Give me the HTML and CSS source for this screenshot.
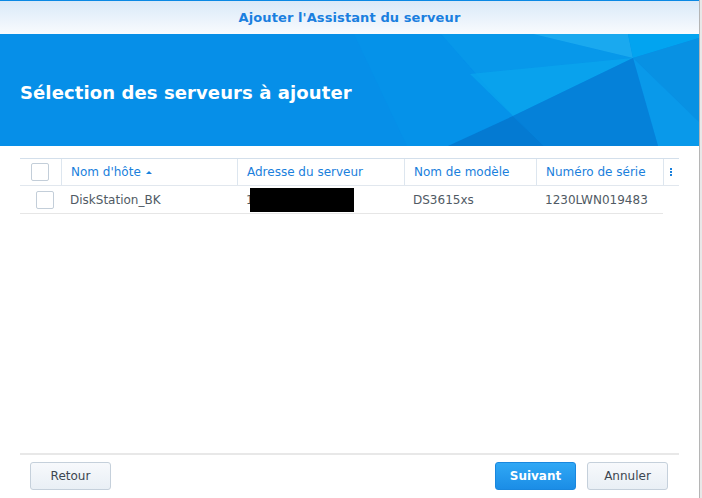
FILE: index.html
```html
<!DOCTYPE html>
<html lang="fr">
  <head>
    <meta charset="UTF-8" />
    <title>Ajouter l'Assistant du serveur</title>
    <link rel="stylesheet" href="styles.css">
  </head>
  <body>
    <div class="window">
      <!-- Title bar -->
      <div class="titlebar">Ajouter l'Assistant du serveur</div>

      <!-- Banner with polygon background -->
      <div class="banner">
        <svg class="banner-bg" viewBox="0 0 699 112" preserveAspectRatio="none">
          <polygon points="354,0 441,0 513,82 448,112 407,112" fill="#0592e9" />
          <polygon points="441,0 533,0 633,24 513,82" fill="#0798ea" />
          <polygon points="470,40 633,24 513,82" fill="#0aa6ee" opacity="0.7" />
          <polygon points="533,0 628,0 633,24" fill="#1aa9ef" />
          <polygon points="628,0 699,0 699,4 633,24" fill="#02a4f0" />
          <polygon points="633,24 699,4 699,88" fill="#0891e3" />
          <polygon points="633,24 699,88 699,112 658,112" fill="#0999ea" />
          <polygon points="513,82 633,24 658,112 544,112" fill="#0581d9" />
          <polygon points="448,112 513,82 544,112" fill="#047ad2" />
        </svg>
        <h1 class="banner-title">Sélection des serveurs à ajouter</h1>
      </div>

      <!-- Server list -->
      <div class="content">
        <div class="grid-head">
          <div class="cell cell-check"><span class="checkbox"></span></div>
          <div class="cell">Nom d'hôte <span class="sort-arrow"></span></div>
          <div class="cell">Adresse du serveur</div>
          <div class="cell">Nom de modèle</div>
          <div class="cell">Numéro de série</div>
          <div class="cell cell-menu">
            <span class="dots"><i></i><i></i><i></i></span>
          </div>
        </div>

        <div class="grid-row">
          <div class="cell cell-check"><span class="checkbox row-checkbox"></span></div>
          <div class="cell">DiskStation_BK</div>
          <div class="cell">1<span class="redacted"></span></div>
          <div class="cell">DS3615xs</div>
          <div class="cell">1230LWN019483</div>
        </div>
      </div>

      <!-- Footer buttons -->
      <div class="footer">
        <button class="btn">Retour</button>
        <div class="footer-right">
          <button class="btn btn-primary">Suivant</button>
          <button class="btn">Annuler</button>
        </div>
      </div>
    </div>
  </body>
</html>
```

FILE: styles.css
```css
/* Base */
body {
  margin: 0;
  background-color: #e8e8e8;
  font-family: "DejaVu Sans", Verdana, sans-serif;
  font-size: 12px;
  color: #505a64;
}

/* Dialog window */
.window {
  width: 699px;
  height: 498px;
  background-color: #fff;
  border-right: 1px solid #b5b5b5;
  display: flex;
  flex-direction: column;
}

/* Title bar */
.titlebar {
  height: 33px;
  border-top: 1px solid #0a88e4;
  background: linear-gradient(#d9e9f8, #f9fbfe);
  display: flex;
  align-items: center;
  justify-content: center;
  color: #1a7fdf;
  font-weight: bold;
  font-size: 13px;
  letter-spacing: 0.1px;
}

/* Banner */
.banner {
  height: 112px;
  background-color: #068fe8;
  position: relative;
  display: flex;
  align-items: center;
  overflow: hidden;
}

.banner-bg {
  position: absolute;
  top: 0;
  left: 0;
  width: 100%;
  height: 100%;
}

.banner-title {
  position: relative;
  margin: 0 0 0 20px;
  padding-top: 4px;
  color: #fff;
  font-size: 18px;
  font-weight: bold;
  letter-spacing: 0.1px;
}

/* Table */
.content {
  flex: 1;
  padding: 12px 20px 0;
}

.grid-head,
.grid-row {
  display: grid;
  grid-template-columns: 41px 176px 167px 132px 127px 17px;
}

.grid-head {
  height: 26px;
  border-top: 1px solid #d3dfeb;
  border-bottom: 1px solid #e1e7ee;
  color: #1a80dc;
}

.grid-head .cell + .cell {
  border-left: 1px solid #dde6ef;
}

.grid-row {
  width: 643px;
  grid-template-columns: 41px 176px 167px 132px 127px;
  height: 27px;
  border-bottom: 1px solid #e6e6e6;
}

.cell {
  display: flex;
  align-items: center;
  padding-left: 9px;
  white-space: nowrap;
}

.cell-check {
  padding-left: 11px;
}

.grid-row .cell-check {
  padding-left: 16px;
}

.checkbox {
  display: inline-block;
  width: 16px;
  height: 16px;
  border: 1px solid #c3ced9;
  border-radius: 2px;
  background-color: #fff;
}

.sort-arrow {
  margin-left: 5px;
  width: 0;
  height: 0;
  border-left: 3px solid transparent;
  border-right: 3px solid transparent;
  border-bottom: 3px solid #1a80dc;
}

.cell-menu {
  padding-left: 6px;
}

.dots {
  display: flex;
  flex-direction: column;
  gap: 1px;
}

.dots i {
  display: block;
  width: 2px;
  height: 2px;
  background-color: #1a80dc;
}

.redacted {
  display: inline-block;
  margin-left: -4px;
  width: 104px;
  height: 24px;
  background-color: #000;
}

/* Footer */
.footer {
  margin: 0 20px;
  border-top: 2px solid #e8e8e8;
  padding: 7px 11px 8px 10px;
  display: flex;
  justify-content: space-between;
}

.footer-right {
  display: flex;
  gap: 11px;
}

.btn {
  width: 81px;
  height: 28px;
  border: 1px solid #c5d0db;
  border-radius: 3px;
  background: linear-gradient(#f7f9fc, #e9eff5);
  font-family: "DejaVu Sans", Verdana, sans-serif;
  font-size: 12px;
  color: #3c4650;
  padding: 0;
}

.btn-primary {
  border-color: #1987de;
  background: linear-gradient(#30a8f5, #1b8de6);
  color: #fff;
  font-weight: bold;
}
```
